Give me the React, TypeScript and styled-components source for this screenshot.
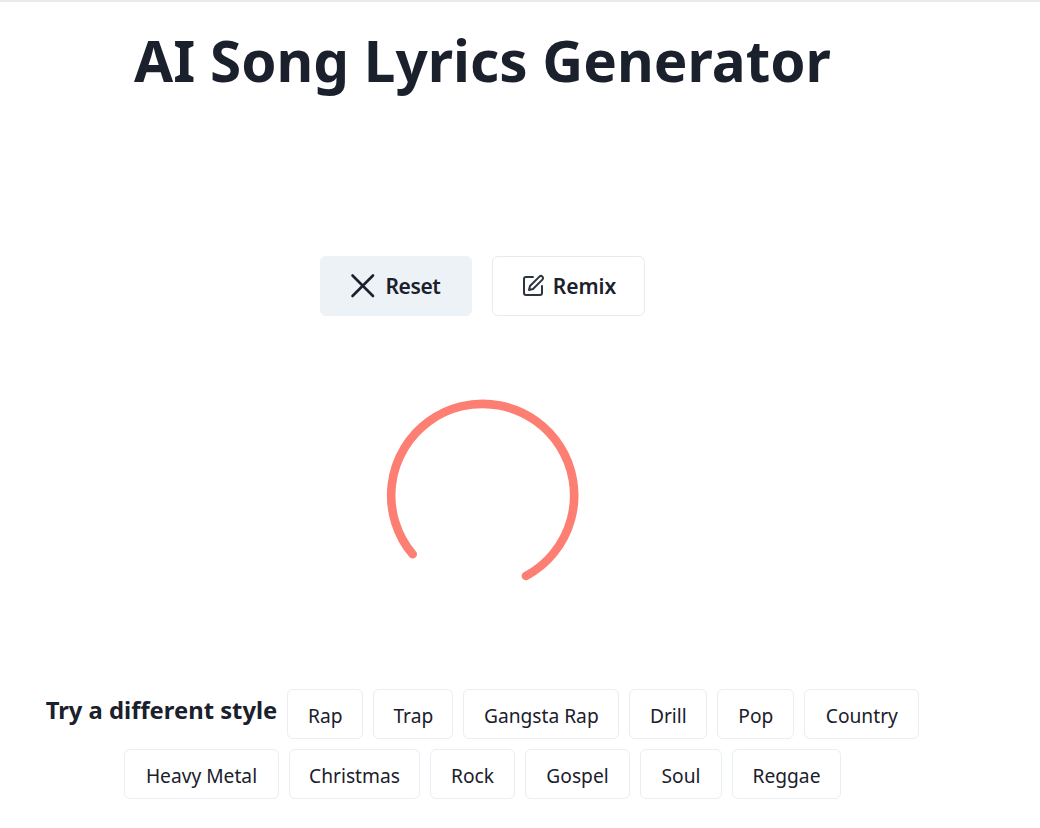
import React from "react";
import styled, { createGlobalStyle } from "styled-components";

const Global = createGlobalStyle`
  html, body { margin: 0; padding: 0; background: #fff; }
  body { font-family: "Noto Sans", "Open Sans", sans-serif; color: #1a202c; }
`;

const Page = styled.main`
  width: 965px;
  height: 826px;
  display: flex;
  flex-direction: column;
  align-items: center;
`;

const TopRule = styled.div`
  width: 1040px;
  height: 2px;
  background: #e8eaec;
  flex: none;
  align-self: flex-start;
`;

const Title = styled.h1`
  margin: 18px 0 0;
  font-size: 56.6px;
  line-height: 80px;
  font-weight: 700;
  color: #1a202c;
  white-space: nowrap;
`;

const Actions = styled.div`
  margin-top: 156px;
  display: flex;
  gap: 20px;
`;

const ActionButton = styled.button<{ $filled?: boolean; $wide: number }>`
  width: ${(p) => p.$wide}px;
  height: 60px;
  display: flex;
  align-items: center;
  justify-content: center;
  gap: 8px;
  border-radius: 6px;
  border: 1px solid ${(p) => (p.$filled ? "#edf2f7" : "#e6ebf0")};
  background: ${(p) => (p.$filled ? "#edf2f7" : "#fff")};
  color: #1a202c;
  font-family: inherit;
  font-size: 21px;
  font-weight: 600;
  letter-spacing: ${(p) => (p.$filled ? "-0.4px" : "0")};
  padding: 0 ${(p) => (p.$filled ? "4px" : "0")} 0 0;
`;

const SpinnerWrap = styled.div`
  margin-top: 79px;
  width: 200px;
  height: 200px;
  flex: none;
`;

const Styles = styled.section`
  margin-top: 94px;
  width: 965px;
  display: flex;
  flex-wrap: wrap;
  justify-content: center;
  gap: 10px;
`;

const StylesLabel = styled.h2`
  margin: 0;
  font-size: 23.8px;
  line-height: 42px;
  font-weight: 700;
  color: #1a202c;
  white-space: nowrap;
`;

const Chip = styled.button<{ $wide: number }>`
  width: ${(p) => p.$wide}px;
  height: 50px;
  padding: 2px 0 0;
  border: 1px solid #e8eef1;
  border-radius: 6px;
  background: #fff;
  color: #1a202c;
  font-family: inherit;
  font-size: 19.2px;
  font-weight: 400;
  white-space: nowrap;
`;

const chips: [string, number][] = [
  ["Rap", 76],
  ["Trap", 80],
  ["Gangsta Rap", 156],
  ["Drill", 78],
  ["Pop", 77],
  ["Country", 115],
  ["Heavy Metal", 155],
  ["Christmas", 131],
  ["Rock", 85],
  ["Gospel", 105],
  ["Soul", 82],
  ["Reggae", 109],
];

export default function App() {
  return (
    <Page>
      <Global />
      <TopRule />
      <Title>AI Song Lyrics Generator</Title>
      <Actions>
        <ActionButton $filled $wide={152}>
          <svg width="30" height="30" viewBox="0 0 30 30" fill="none" stroke="#1a202c" strokeWidth="2.6" strokeLinecap="round">
            <path d="M4.5 4.5 L25 25 M25 4.5 L4.5 25" />
          </svg>
          Reset
        </ActionButton>
        <ActionButton $wide={153}>
          <svg width="24" height="24" viewBox="0 0 24 24" fill="none" stroke="#2d3540" strokeWidth="2" strokeLinecap="round" strokeLinejoin="round">
            <path d="M12 3H5a2 2 0 0 0-2 2v14a2 2 0 0 0 2 2h14a2 2 0 0 0 2-2v-7" />
            <path d="M18.4 2.6a2.1 2.1 0 1 1 3 3L12 15l-4 1 1-4Z" />
          </svg>
          Remix
        </ActionButton>
      </Actions>
      <SpinnerWrap>
        <svg width="200" height="200" viewBox="0 0 200 200" fill="none">
          <path
            d="M29.7 159.3 A91.5 91.5 0 1 1 142.9 181"
            stroke="#fd7f74"
            strokeWidth="8.6"
            strokeLinecap="round"
          />
        </svg>
      </SpinnerWrap>
      <Styles>
        <StylesLabel>Try a different style</StylesLabel>
        {chips.map(([name, wide]) => (
          <Chip key={name} $wide={wide}>{name}</Chip>
        ))}
      </Styles>
    </Page>
  );
}
